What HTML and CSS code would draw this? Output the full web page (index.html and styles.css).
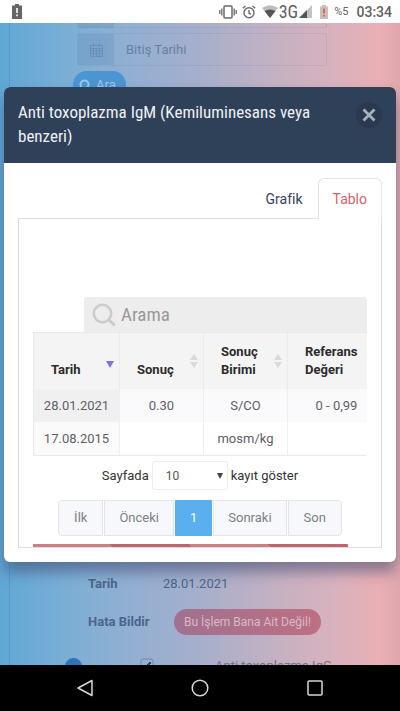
FILE: index.html
```html
<!DOCTYPE html>
<html lang="tr">
<head>
    <meta charset="UTF-8">
    <meta name="viewport" content="width=device-width, initial-scale=1.0">
    <title>Tahlil Sonuçları</title>
    <link rel="stylesheet" href="styles.css">
</head>
<body>
    <header class="status-bar">
        <svg class="status-alert" width="10" height="15" viewBox="0 0 10 15">
            <path d="M3 0h4v1.500h3V15H0V1.500h3z" fill="#666"/>
            <path d="M4.200 4h1.600v5H4.200zM4.200 10.500h1.600v1.800H4.200z" fill="#fff"/>
        </svg>
        <svg width="18" height="14" viewBox="0 0 18 14" fill="none" stroke="#6b6b6b">
            <rect x="5" y="1" width="8" height="12" rx="1" stroke-width="1.500"/>
            <path d="M2.800 3.500v7M.8 5v4M15.200 3.500v7M17.200 5v4" stroke-width="1.300"/>
        </svg>
        <svg class="status-alarm" width="14" height="14" viewBox="0 0 14 14" fill="none" stroke="#6b6b6b" stroke-width="1.400">
            <circle cx="7" cy="7.800" r="5"/>
            <path d="M7 5v3l2 1.300M.8 3.200L3.500 1M13.200 3.200L10.500 1"/>
        </svg>
        <svg class="status-wifi" width="16" height="13" viewBox="0 0 16 13">
            <path d="M0 3Q8-2.500 16 3L8 13z" fill="#bdbdbd"/>
            <path d="M2.500 6Q8 3 13.500 6L8 13z" fill="#555"/>
        </svg>
        <span class="status-network">3G</span>
        <svg width="13" height="13" viewBox="0 0 13 13">
            <path d="M13 0v13H0z" fill="#c4c4c4"/>
            <path d="M8 5v8H0z" fill="#555"/>
        </svg>
        <svg class="status-battery" width="8" height="14" viewBox="0 0 8 14">
            <path d="M2 0h4v1.500h2V14H0V1.500h2z" fill="#c6c0bd"/>
            <path d="M3.200 3.500h1.600v5H3.200zM3.200 10h1.600v1.600H3.200z" fill="#f4511e"/>
        </svg>
        <span class="status-percent">%5</span>
        <span class="status-time">03:34</span>
    </header>

    <main class="screen">
        <div class="page">
            <form class="search-form">
                <div class="date-field date-field-start"></div>
                <div class="date-field">
                    <label class="date-icon" for="endDate">
                        <svg width="13" height="14" viewBox="0 0 13 14" fill="none" stroke="#6b8fb9">
                            <path d="M.5 2.500h12v11H.5zM.5 5.500h12M.5 8h12M.5 10.800h12M3.500 5.500v8M6.500 5.500v8M9.500 5.500v8M3.500 0v3.500M9.500 0v3.500"/>
                        </svg>
                    </label>
                    <input id="endDate" type="text" placeholder="Bitiş Tarihi" aria-label="Bitiş Tarihi">
                </div>
                <button class="btn-search" type="button">
                    <svg width="12" height="12" viewBox="0 0 12 12" fill="none" stroke="currentColor" stroke-width="2">
                        <circle cx="5.500" cy="5.500" r="4"/>
                        <path d="M8.500 8.500l3 3"/>
                    </svg>
                    Ara
                </button>
            </form>

            <section class="results">
                <dl class="detail">
                    <dt>Tarih</dt>
                    <dd>28.01.2021</dd>
                    <dt>Hata Bildir</dt>
                    <dd><button class="btn-report" type="button">Bu İşlem Bana Ait Değil!</button></dd>
                </dl>
                <div class="result-row">
                    <span class="expand-dot"></span>
                    <svg width="14" height="14" viewBox="0 0 14 14" fill="none" stroke="#7188a8">
                        <rect x="1" y="1" width="12" height="12" rx="2"/>
                        <path d="M6 8l4-4 1 1-4 4z" fill="#34465f" stroke="#34465f"/>
                    </svg>
                    <span class="result-name">Anti toxoplazma IgG</span>
                </div>
            </section>
        </div>

        <div class="modal" role="dialog" aria-labelledby="modalTitle">
            <div class="modal-header">
                <h2 id="modalTitle">Anti toxoplazma IgM (Kemiluminesans veya benzeri)</h2>
                <button class="modal-close" type="button" aria-label="Kapat">
                    <svg width="14" height="14" viewBox="0 0 14 14" fill="none" stroke="#a9b1bd" stroke-width="2.800">
                        <path d="M1.500 1.500l11 11M12.500 1.500l-11 11"/>
                    </svg>
                </button>
            </div>

            <div class="modal-body">
                <nav class="tabs">
                    <a class="tab" href="#grafik">Grafik</a>
                    <a class="tab active" href="#tablo">Tablo</a>
                </nav>

                <div class="tab-panel" id="tablo">
                    <div class="table-search">
                        <svg width="24" height="24" viewBox="0 0 24 24" fill="none" stroke="#cbcbcb" stroke-width="2.600">
                            <circle cx="10.500" cy="10.500" r="8.700"/>
                            <path d="M16.800 16.800l6 5.600" stroke-width="3"/>
                        </svg>
                        <input type="text" placeholder="Arama" aria-label="Arama">
                    </div>

                    <div class="table-wrap">
                        <table class="data-table">
                            <thead>
                                <tr>
                                    <th class="sorted">Tarih
                                        <svg class="sort" width="8" height="14" viewBox="0 0 8 14"><path d="M0 7h8l-4 7z" fill="#7a78dc"/></svg>
                                    </th>
                                    <th>Sonuç
                                        <svg class="sort" width="8" height="14" viewBox="0 0 8 14"><path d="M0 6l4-6 4 6zM0 8h8l-4 6z" fill="#d9d9d9"/></svg>
                                    </th>
                                    <th>Sonuç Birimi
                                        <svg class="sort" width="8" height="14" viewBox="0 0 8 14"><path d="M0 6l4-6 4 6zM0 8h8l-4 6z" fill="#d9d9d9"/></svg>
                                    </th>
                                    <th class="col-ref">Referans Değeri</th>
                                </tr>
                            </thead>
                            <tbody>
                                <tr>
                                    <td class="sorted">28.01.2021</td>
                                    <td>0.30</td>
                                    <td>S/CO</td>
                                    <td>0 - 0,99</td>
                                </tr>
                                <tr>
                                    <td class="sorted">17.08.2015</td>
                                    <td></td>
                                    <td>mosm/kg</td>
                                    <td></td>
                                </tr>
                            </tbody>
                        </table>
                    </div>

                    <div class="page-length">
                        <label for="pageLength">Sayfada</label>
                        <div class="select-box">
                            <select id="pageLength">
                                <option>10</option>
                                <option>25</option>
                                <option>50</option>
                            </select>
                        </div>
                        <span>kayıt göster</span>
                    </div>

                    <div class="pagination">
                        <button type="button">İlk</button>
                        <button type="button">Önceki</button>
                        <button type="button" class="current">1</button>
                        <button type="button">Sonraki</button>
                        <button type="button">Son</button>
                    </div>

                    <div class="stripe"></div>
                </div>
            </div>
        </div>
    </main>

    <footer class="nav-bar">
        <button type="button" aria-label="Geri">
            <svg width="18" height="18" viewBox="0 0 18 18"><path d="M16 1.500v15L2 9z"/></svg>
        </button>
        <button type="button" aria-label="Ana ekran">
            <svg width="18" height="18" viewBox="0 0 18 18"><circle cx="9" cy="9" r="7.800"/></svg>
        </button>
        <button type="button" aria-label="Son uygulamalar">
            <svg width="18" height="18" viewBox="0 0 18 18"><rect x="2" y="2" width="14" height="14" rx="1"/></svg>
        </button>
    </footer>
</body>
</html>
```
FILE: styles.css
```css
* {
    box-sizing: border-box;
}
body {
    margin: 0;
    height: 100vh;
    display: flex;
    flex-direction: column;
    overflow: hidden;
    font-family: Roboto, "Liberation Sans", sans-serif;
    font-size: 13px;
    line-height: 18px;
    color: #333;
}
button, input, select {
    font-family: inherit;
    font-size: inherit;
    line-height: inherit;
    margin: 0;
}

/* phone status bar */
.status-bar {
    flex: none;
    height: 23px;
    padding: 0 8px 0 12px;
    display: flex;
    align-items: center;
    background: #fff;
    color: #5f5f5f;
}
.status-alert {
    margin-right: auto;
}
.status-alarm {
    margin: 0 6px 0 5px;
}
.status-network {
    margin: 0 1px 0 1px;
    font-family: "Roboto Condensed", Roboto, sans-serif;
    font-size: 18px;
}
.status-battery {
    margin: 0 6px 0 8px;
}
.status-percent {
    font-size: 11px;
}
.status-time {
    margin-left: 8px;
    font-size: 14px;
    font-weight: 500;
}

/* page under the dialog */
.screen {
    flex: 1;
    min-height: 0;
    position: relative;
    overflow: hidden;
    background: linear-gradient(90deg, #60a7d5 0%, #78aed5 15%, #8bafd3 27%, #a6afcc 50%, #c6b1c2 70%, #d9b2bd 84%, #e9afb4 95%, #dfa8ac 100%);
}
.page {
    height: 100%;
    margin: 0 9px;
    padding: 0 64px 0 67px;
    border-left: 1px solid rgba(60, 90, 130, 0.2);
}
.search-form {
    height: 80px;
}
.date-field {
    display: flex;
    height: 33px;
    border: 1px solid rgba(80, 110, 160, 0.12);
    border-radius: 3px;
}
.date-field-start {
    height: 5px;
    margin-bottom: 5px;
    border-top: 0;
    background: linear-gradient(90deg, rgba(80, 120, 170, 0.2) 36px, transparent 36px);
}
.date-icon {
    flex: none;
    width: 36px;
    display: flex;
    align-items: center;
    justify-content: center;
    background: rgba(80, 120, 170, 0.2);
}
.date-field input {
    flex: 1;
    min-width: 0;
    padding: 0 12px;
    border: 0;
    background: none;
}
.date-field input::placeholder {
    color: #6680a3;
    opacity: 1;
}
.btn-search {
    display: flex;
    align-items: center;
    gap: 5px;
    height: 27px;
    margin: 5px 0 0 -4px;
    padding: 0 10px 0 6px;
    border: 0;
    border-radius: 14px;
    background: #4a95d2;
    color: #a3c6e8;
}
.results {
    margin-top: 462px;
}
.detail {
    display: grid;
    grid-template-columns: 75px 1fr;
    margin: 0;
    padding-left: 11px;
    line-height: 38px;
    color: #4b658a;
}
.detail dt {
    font-weight: 700;
}
.detail dd {
    margin: 0;
    white-space: nowrap;
}
.detail dd:last-child {
    display: flex;
    align-items: center;
}
.btn-report {
    height: 26px;
    margin-left: 11px;
    padding: 0 10px;
    border: 0;
    border-radius: 13px;
    background: linear-gradient(90deg, #a0718f, #bd7082);
    color: #d9b9c9;
    font-size: 12px;
    line-height: 26px;
}
.result-row {
    display: flex;
    padding-top: 17px;
    margin-left: -12px;
}
.result-row > * {
    flex: none;
}
.expand-dot {
    width: 17px;
    height: 17px;
    margin-right: 58px;
    border-radius: 50%;
    background: #2f73b5;
}
.result-name {
    margin-left: 61px;
    line-height: 15px;
    color: #7a6f88;
    white-space: nowrap;
}

/* dialog */
.modal {
    position: absolute;
    top: 64px;
    left: 4px;
    right: 4px;
    border-radius: 6px;
    background: #fff;
    box-shadow: 0 10px 14px rgba(60, 70, 110, 0.55);
}
.modal-header {
    display: flex;
    justify-content: space-between;
    align-items: flex-start;
    padding: 13px 14px 15px;
    border-radius: 6px 6px 0 0;
    background: #2f4059;
}
.modal-header h2 {
    max-width: 310px;
    margin: 0;
    font-family: "Roboto Condensed", "Liberation Sans Narrow", Roboto, sans-serif;
    font-size: 17px;
    font-weight: 400;
    line-height: 24px;
    color: #eef1f5;
}
.modal-close {
    flex: none;
    display: flex;
    align-items: center;
    justify-content: center;
    width: 26px;
    height: 26px;
    margin-top: 2px;
    padding: 0;
    border: 0;
    border-radius: 50%;
    background: #29394f;
}
.modal-body {
    padding: 15px 14px 14px;
}
.tabs {
    display: flex;
    justify-content: flex-end;
    height: 40px;
}
.tab {
    padding: 0 14px;
    border: 1px solid transparent;
    border-bottom: 0;
    font-size: 14px;
    line-height: 40px;
    color: #34425e;
    text-decoration: none;
}
.tab.active {
    position: relative;
    height: 41px;
    border-color: #e3e3e3;
    border-radius: 6px 6px 0 0;
    background: #fff;
    color: #d3636b;
}
.tab-panel {
    padding: 78px 14px 0;
    border: 1px solid #dedede;
}
.table-search {
    display: flex;
    align-items: center;
    gap: 5px;
    height: 35px;
    margin-left: 51px;
    padding: 0 8px;
    border-radius: 3px 3px 0 0;
    background: #ededed;
}
.table-search input {
    flex: 1;
    min-width: 0;
    padding: 0;
    border: 0;
    background: none;
    font-family: "Roboto Condensed", "Liberation Sans Narrow", Roboto, sans-serif;
    font-size: 19px;
    line-height: 24px;
}
.table-search input::placeholder {
    color: #999;
    opacity: 1;
}
.table-wrap {
    overflow: hidden;
}
.data-table {
    width: 100%;
    min-width: 353px;
    table-layout: fixed;
    border-collapse: separate;
    border-spacing: 0;
    border-top: 1px solid #e9e9e9;
    border-left: 1px solid #e9e9e9;
}
.data-table th {
    position: relative;
    height: 56px;
    padding: 0 16px 10px 17px;
    border-right: 1px solid #ebebeb;
    background: #f4f4f4;
    text-align: left;
    vertical-align: bottom;
    color: #2c2c2c;
}
.data-table th.sorted {
    width: 86px;
}
.data-table .col-ref {
    width: 98px;
}
.sort {
    position: absolute;
    top: 21px;
    right: 5px;
}
.data-table td {
    height: 33px;
    padding: 0;
    border-right: 1px solid #efefef;
    text-align: center;
    color: #606066;
}
.data-table tbody tr:first-child td {
    background: #fafafd;
}
.data-table tbody tr:first-child .sorted {
    background: #f0f0f0;
}
.data-table tbody tr:last-child td {
    height: 34px;
    border-bottom: 1px solid #e9e9e9;
}
.data-table tbody tr:last-child .sorted {
    background: #fafafa;
}
.page-length {
    display: flex;
    align-items: center;
    justify-content: center;
    gap: 3px;
    margin-top: 5px;
}
.select-box {
    position: relative;
}
.select-box::after {
    content: "";
    position: absolute;
    top: 12px;
    right: 5px;
    border: 3px solid transparent;
    border-top: 6px solid #444;
    border-bottom: 0;
}
.page-length select {
    appearance: none;
    width: 76px;
    height: 29px;
    padding: 0 13px;
    border: 1px solid #ececec;
    border-radius: 3px;
    background: #fff;
    font-size: 12px;
    color: #555;
}
.pagination {
    display: flex;
    justify-content: center;
    gap: 1px;
    margin-top: 10px;
}
.pagination button {
    height: 36px;
    padding: 0 14px;
    border: 1px solid #e2e4ea;
    background: #f7f8fc;
    color: #7c7f85;
}
.pagination button:first-child {
    padding: 0 15px;
    border-radius: 4px 0 0 4px;
}
.pagination button:last-child {
    padding: 0 15px;
    border-radius: 0 4px 4px 0;
}
.pagination .current {
    border-color: #5aafee;
    background: #5aafee;
    color: #fff;
}
.stripe {
    height: 3px;
    margin: 8px 19px 0 0;
    background: repeating-linear-gradient(45deg, #cd7f85 0 56px, #c0636b 56px 112px);
}

/* android navigation */
.nav-bar {
    flex: none;
    height: 46px;
    padding: 0 28px;
    display: flex;
    align-items: center;
    background: #000;
}
.nav-bar button {
    flex: 1;
    padding: 0;
    border: 0;
    background: none;
    line-height: 0;
}
.nav-bar svg {
    fill: none;
    stroke: #d8d8d8;
    stroke-width: 1.5;
    stroke-linejoin: round;
}
```
